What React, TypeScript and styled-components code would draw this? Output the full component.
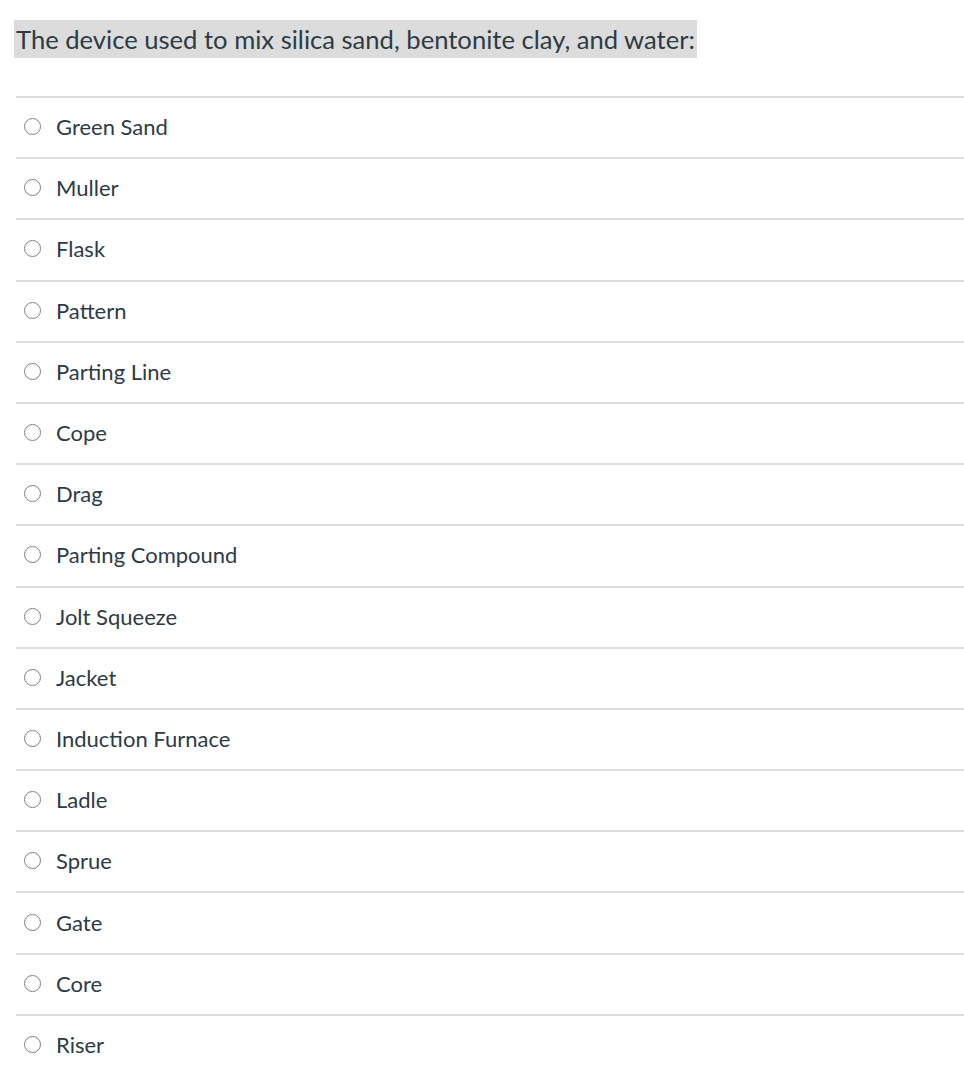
import styled, { createGlobalStyle } from "styled-components";

const GlobalStyle = createGlobalStyle`
  body {
    margin: 0;
    background: #ffffff;
    font-family: Lato, "Noto Sans", sans-serif;
    color: #2d3b45;
  }
`;

const Page = styled.div`
  width: 964px;
  padding-top: 20px;
`;

const Question = styled.div`
  margin-left: 14px;
  display: inline-block;
  background: #dcdcdc;
  font-size: 25.6px;
  line-height: 38px;
  height: 38px;
  padding: 0 2px;
`;

const Answers = styled.ul`
  list-style: none;
  margin: 38px 0 0 16px;
  padding: 0;
`;

const Answer = styled.li`
  box-sizing: border-box;
  height: 61.2px;
  border-top: 2px solid #dddddd;
  display: flex;
  align-items: center;
  padding: 0 0 2px 8px;
  font-size: 22px;
`;

const Radio = styled.span`
  box-sizing: border-box;
  width: 17px;
  height: 17px;
  border-radius: 50%;
  border: 1.5px solid #808080;
  margin-right: 15px;
  flex-shrink: 0;
`;

const answers = [
  "Green Sand",
  "Muller",
  "Flask",
  "Pattern",
  "Parting Line",
  "Cope",
  "Drag",
  "Parting Compound",
  "Jolt Squeeze",
  "Jacket",
  "Induction Furnace",
  "Ladle",
  "Sprue",
  "Gate",
  "Core",
  "Riser",
];

function App() {
  return (
    <Page>
      <GlobalStyle />
      <Question>The device used to mix silica sand, bentonite clay, and water:</Question>
      <Answers>
        {answers.map((a) => (
          <Answer key={a}>
            <Radio />
            {a}
          </Answer>
        ))}
      </Answers>
    </Page>
  );
}

export default App;
